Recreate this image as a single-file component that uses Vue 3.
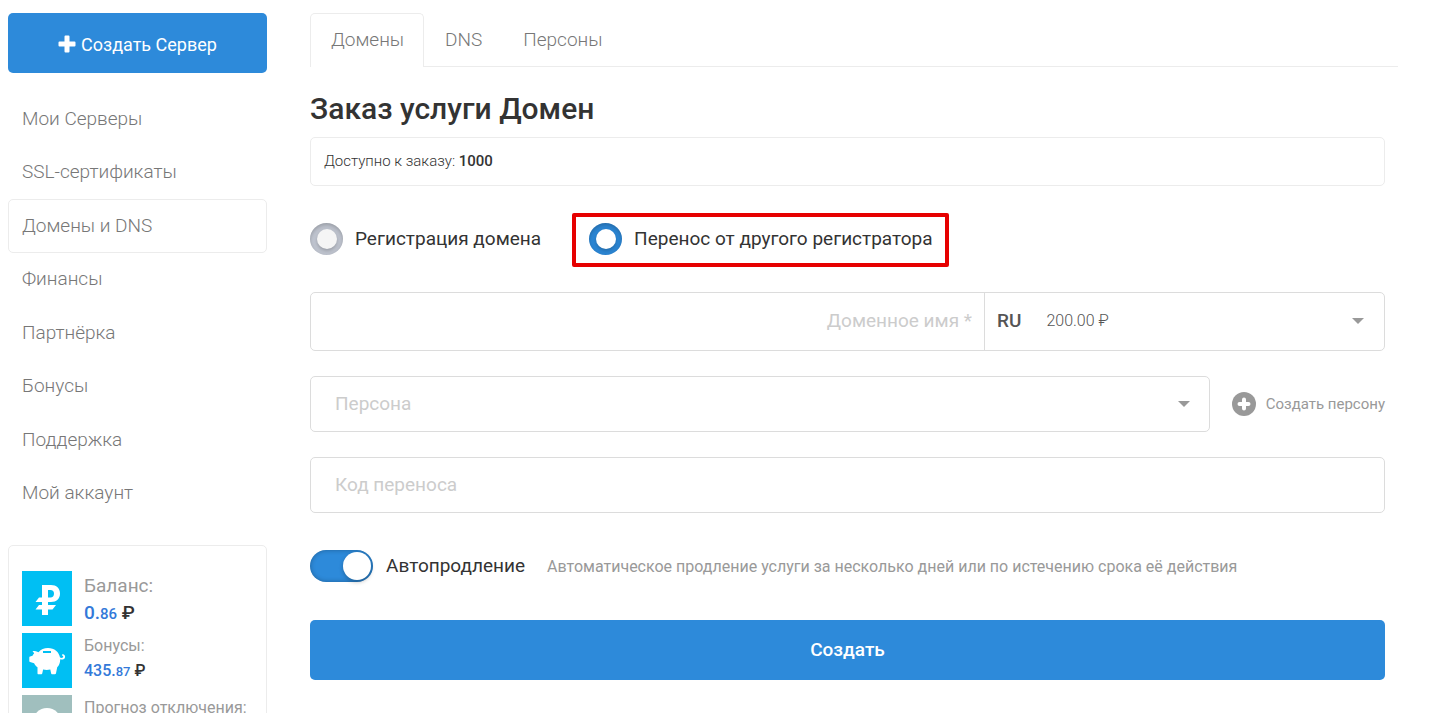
<script setup>
import { ref } from 'vue'

const menu = ['Мои Серверы', 'SSL-сертификаты', 'Домены и DNS', 'Финансы', 'Партнёрка', 'Бонусы', 'Поддержка', 'Мой аккаунт']
const activeMenu = 'Домены и DNS'
const tabs = ['Домены', 'DNS', 'Персоны']
const activeTab = 'Домены'

const mode = ref('transfer')
const zone = ref('RU')
const person = ref('')
const autoRenew = ref(true)
</script>

<template>
  <div class="page">
    <aside class="sidebar">
      <button type="button" class="primary create-server">
        <svg class="plus" viewBox="0 0 18 18" aria-hidden="true"><path d="M7.500 0.500h3a1 1 0 0 1 1 1V6.500h5a1 1 0 0 1 1 1v3a1 1 0 0 1-1 1h-5v5a1 1 0 0 1-1 1h-3a1 1 0 0 1-1-1v-5h-5a1 1 0 0 1-1-1v-3a1 1 0 0 1 1-1h5V1.500a1 1 0 0 1 1-1z" /></svg>
        Создать Сервер
      </button>

      <nav class="menu">
        <a v-for="item in menu" :key="item" href="#" :class="{ active: item === activeMenu }">{{ item }}</a>
      </nav>

      <section class="account">
        <div class="account-row">
          <div class="tile">
            <svg viewBox="0 0 50 55" aria-hidden="true">
              <path fill-rule="evenodd" d="M20 14h9c5.500 0 9 3.200 9 8.500s-3.500 8.500-9 8.500h-3v3h8l-3.500 4.500H26V44h-6v-5.500h-6.500L17 34h3v-3h-6.500L17 26.500h3zM26 19v7.500h2.500c2.200 0 3.500-1.400 3.500-3.800S30.700 19 28.500 19z" />
            </svg>
          </div>
          <div>
            <div class="caption">Баланс:</div>
            <div class="amount"><span class="sum">0.<small>86</small></span> ₽</div>
          </div>
        </div>
        <div class="account-row compact">
          <div class="tile">
            <svg viewBox="0 0 50 55" aria-hidden="true">
              <path fill-rule="evenodd" d="M10.500 18c2.500 0 4.500.4 6 1.200 2.600-3 5.500-4.200 9.500-4.200 6.500 0 11 4 12 9.500 1.300.7 3 .4 3.200-.5.200-.7-.3-1.200-1.200-1.500l.5-1.500c2 .4 3 2 2.500 3.500-.5 1.800-2.500 2.500-4.800 1.800 0 3.500-1 6-3 8l-1.200 6c-.1.700-.5 1-1.200 1h-2.500c-.7 0-1-.3-1.200-1l-.8-3.800c-2.300.6-4.900.6-7.200 0l-.8 3.800c-.2.700-.5 1-1.200 1h-2.600c-.7 0-1-.3-1-1.100v-6c-1.500-1-2.600-2.300-3.400-4l-4-1.200c-.5-.2-.8-.5-.8-1.100v-3.500c0-.6.2-.9.800-1l2.400-.7c.4-1 .9-1.700 1.700-2.500zM21 18v2h8v-2z" />
            </svg>
          </div>
          <div>
            <div class="caption">Бонусы:</div>
            <div class="amount"><span class="sum">435.<small>87</small></span> ₽</div>
          </div>
        </div>
        <div class="account-row compact">
          <div class="tile muted">
            <svg viewBox="0 0 50 55" aria-hidden="true"><circle cx="25" cy="27" r="14" /></svg>
          </div>
          <div class="caption">Прогноз отключения:</div>
        </div>
      </section>
    </aside>

    <main class="main">
      <nav class="tabs">
        <a v-for="tab in tabs" :key="tab" href="#" :class="{ active: tab === activeTab }">{{ tab }}</a>
      </nav>

      <form class="order" @submit.prevent>
        <h1>Заказ услуги Домен</h1>
        <p class="limit">Доступно к заказу: <strong>1000</strong></p>

        <div class="modes">
          <label class="mode">
            <input v-model="mode" type="radio" name="mode" value="register" />
            Регистрация домена
          </label>
          <label class="mode highlighted">
            <input v-model="mode" type="radio" name="mode" value="transfer" />
            Перенос от другого регистратора
          </label>
        </div>

        <div class="domain">
          <input class="domain-name" type="text" placeholder="Доменное имя *" aria-label="Доменное имя" />
          <div class="zone">
            <strong aria-hidden="true">{{ zone }}</strong>
            <span class="price" aria-hidden="true">200.00 ₽</span>
            <select v-model="zone" aria-label="Доменная зона">
              <option value="RU">RU</option>
            </select>
          </div>
        </div>

        <div class="person">
          <div class="person-field">
            <select v-model="person" aria-label="Персона">
              <option value="">Персона</option>
            </select>
          </div>
          <a href="#" class="add-person">
            <svg viewBox="0 0 24 24" aria-hidden="true">
              <circle cx="12" cy="12" r="12" fill="#999" />
              <path d="M12 7.500v9M7.500 12h9" stroke="#fff" stroke-width="4" stroke-linecap="round" />
            </svg>
            Создать персону
          </a>
        </div>

        <input class="code" type="text" placeholder="Код переноса" aria-label="Код переноса" />

        <div class="renew">
          <label>
            <input v-model="autoRenew" type="checkbox" role="switch" />
            Автопродление
          </label>
          <span class="hint">Автоматическое продление услуги за несколько дней или по истечению срока её действия</span>
        </div>

        <button type="submit" class="primary submit">Создать</button>
      </form>
    </main>
  </div>
</template>

<style>
body {
  margin: 0;
  background: #fff;
}
</style>

<style scoped>
.page,
.page * {
  box-sizing: border-box;
}
.page {
  display: flex;
  gap: 43px;
  height: 100vh;
  overflow: hidden;
  padding: 13px 57px 0 8px;
  font-family: Roboto, "Noto Sans", sans-serif;
  font-size: 19px;
  line-height: 24px;
  color: #333;
}
a {
  color: #777;
  text-decoration: none;
}
input,
select,
button {
  font: inherit;
  margin: 0;
}
.primary {
  display: flex;
  align-items: center;
  justify-content: center;
  width: 100%;
  height: 60px;
  border: 0;
  border-radius: 5px;
  background: #2d8ada;
  color: #fff;
  font-weight: 500;
  cursor: pointer;
}
.sidebar {
  flex: 0 0 259px;
}
.primary.create-server {
  gap: 5px;
  padding-top: 4px;
  font-size: 18px;
  font-weight: 400;
}
.plus {
  width: 18px;
  height: 18px;
  margin-bottom: 2px;
  fill: #fff;
}
.menu {
  display: grid;
  grid-auto-rows: 1fr;
  min-height: 428px;
  margin-top: 19px;
}
.menu a {
  display: flex;
  align-items: center;
  padding: 0 13px;
  border: 1px solid transparent;
  border-radius: 5px;
  font-weight: 300;
}
.menu a.active {
  border-color: #ececec;
}
.account {
  display: grid;
  gap: 7px;
  margin-top: 25px;
  padding: 25px 13px;
  border: 1px solid #ececec;
  border-radius: 5px;
}
.account-row {
  display: flex;
  gap: 12px;
}
.tile {
  flex: none;
  width: 50px;
  height: 55px;
  background: #00bff3;
}
.tile.muted {
  background: #a0bfbe;
}
.tile svg {
  display: block;
  width: 50px;
  height: 55px;
  fill: #fff;
}
.caption {
  padding-top: 3px;
  color: #999;
  white-space: nowrap;
}
.amount {
  padding-top: 3px;
  font-weight: 500;
}
.sum {
  color: #3379d9;
}
.amount small {
  font-size: 15px;
}
.compact {
  font-size: 16px;
}
.compact .caption {
  padding-top: 1px;
}
.compact .amount {
  padding-top: 1px;
}
.compact .amount small {
  font-size: 13px;
}
.main {
  flex: 1;
  min-width: 0;
}
.tabs {
  display: flex;
  border-bottom: 1px solid #ececec;
}
.tabs a {
  height: 54px;
  margin-bottom: -1px;
  padding: 14px 19px 0 20px;
  border: 1px solid transparent;
  border-bottom: 0;
  border-radius: 5px 5px 0 0;
  font-weight: 300;
}
.tabs a.active {
  border-color: #ececec;
  background: #fff;
}
.order {
  padding-right: 13px;
}
h1 {
  margin: 23px 0 10px;
  font-size: 30px;
  line-height: 37px;
  font-weight: 500;
}
.limit {
  margin: 0;
  padding: 11px 13px 12px;
  border: 1px solid #ececec;
  border-radius: 5px;
  font-size: 15px;
  font-weight: 300;
}
.limit strong {
  font-weight: 500;
}
.modes {
  display: flex;
  gap: 31px;
  margin-top: 27px;
}
.mode {
  display: flex;
  align-items: center;
  gap: 12px;
  height: 54px;
  padding-bottom: 2px;
  cursor: pointer;
}
.mode.highlighted {
  padding: 0 12px 2px 13px;
  border: 4px solid #e60000;
  border-radius: 2px;
}
.mode input {
  appearance: none;
  display: grid;
  place-items: center;
  width: 33px;
  height: 32px;
  border-radius: 50%;
  background: #c5cad5;
  box-shadow: inset 0 2px 5px rgba(0, 0, 0, 0.25);
}
.mode input::before {
  content: "";
  width: 20px;
  height: 20px;
  border-radius: 50%;
  background: #f5f5f5;
  box-shadow: 0 2px 4px rgba(0, 0, 0, 0.25);
}
.mode input:checked {
  background: #2d8ada;
}
.mode input:checked::before {
  background: #fff;
}
.domain {
  display: flex;
  height: 59px;
  margin-top: 25px;
  border: 1px solid #dcdcdc;
  border-radius: 5px;
}
.domain-name {
  flex: 1;
  min-width: 0;
  padding: 0 12px 2px;
  border: 0;
  outline: 0;
  background: none;
  text-align: right;
}
::placeholder {
  color: #ccc;
  opacity: 1;
}
.zone {
  position: relative;
  display: flex;
  align-items: center;
  gap: 25px;
  flex: 0 0 400px;
  padding: 0 20px 2px 12px;
  border-left: 1px solid #dcdcdc;
  color: #555;
}
.zone strong {
  font-weight: 500;
}
.price {
  font-size: 16px;
  font-weight: 300;
}
.zone::after,
.person-field::after {
  content: "";
  margin-left: auto;
  border: 6px solid transparent;
  border-top-color: #999;
  border-bottom: 0;
}
.zone select {
  position: absolute;
  inset: 0;
  width: 100%;
  opacity: 0;
  cursor: pointer;
}
.person {
  display: flex;
  align-items: center;
  gap: 22px;
  margin-top: 25px;
}
.person-field {
  flex: 1;
  display: grid;
  grid-template-columns: 1fr 12px;
  align-items: center;
  height: 56px;
  padding-right: 19px;
  border: 1px solid #dcdcdc;
  border-radius: 5px;
}
.person-field::after {
  grid-area: 1 / 2;
  pointer-events: none;
}
.person-field select {
  grid-area: 1 / 1 / 2 / 3;
  height: 54px;
  appearance: none;
  padding: 0 24px;
  border: 0;
  outline: 0;
  background: none;
  color: #ccc;
}
.add-person {
  display: flex;
  align-items: center;
  gap: 10px;
  color: #999;
  font-size: 15px;
}
.add-person svg {
  width: 24px;
  height: 24px;
}
.code {
  display: block;
  width: 100%;
  height: 56px;
  margin-top: 25px;
  padding: 0 24px 2px;
  border: 1px solid #dcdcdc;
  border-radius: 5px;
  outline: 0;
}
.renew {
  display: flex;
  align-items: center;
  gap: 22px;
  margin-top: 37px;
}
.renew label {
  display: flex;
  align-items: center;
  gap: 13px;
}
.renew input {
  appearance: none;
  display: flex;
  align-items: center;
  justify-content: flex-end;
  width: 63px;
  height: 32px;
  padding: 0 2px;
  border-radius: 16px;
  background: #2d8ada;
  box-shadow: inset 0 0 5px rgba(0, 0, 0, 0.3);
}
.renew input:not(:checked) {
  justify-content: flex-start;
  background: #c5cad5;
}
.renew input::before {
  content: "";
  width: 28px;
  height: 28px;
  border-radius: 50%;
  background: #fff;
  box-shadow: 0 2px 4px rgba(0, 0, 0, 0.25);
}
.hint {
  padding-top: 1px;
  color: #999;
  font-size: 16px;
}
.submit {
  margin-top: 38px;
}
</style>
